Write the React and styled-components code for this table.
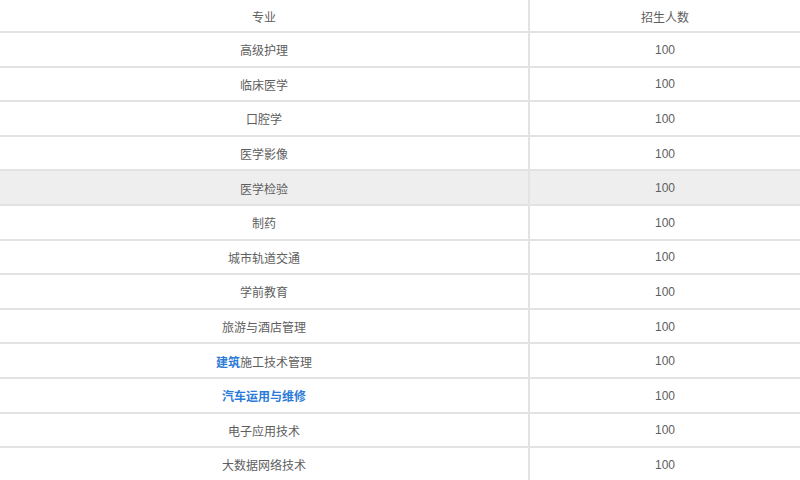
import React from 'react';
import styled, { createGlobalStyle } from 'styled-components';

const GlobalStyle = createGlobalStyle`
    body {
        margin: 0;
        background: #fff;
        overflow: hidden;
        font-family: "Liberation Sans", "Noto Sans CJK SC", sans-serif;
    }
`;

const Table = styled.div`
    width: 800px;
    height: 480px;
    overflow: hidden;
    font-size: 12px;
    color: #5e5e5e;
`;

const Row = styled.div`
    display: grid;
    grid-template-columns: 528px 1fr;
    box-sizing: border-box;
    height: ${p => (p.$head ? '31px' : '34.6px')};
    border-top: ${p => (p.$head ? 'none' : '2px solid #e3e3e3')};
    background: ${p => (p.$hover ? '#eeeeee' : '#fff')};
`;

const Cell = styled.div`
    display: flex;
    align-items: center;
    justify-content: center;
    padding-top: 1px;
    box-sizing: border-box;
    & + & {
        border-left: 2px solid #e3e3e3;
    }
`;

const Link = styled.span`
    color: #2b7bd8;
    font-weight: bold;
`;

const rows = [
    { name: '高级护理' },
    { name: '临床医学' },
    { name: '口腔学' },
    { name: '医学影像' },
    { name: '医学检验', hover: true },
    { name: '制药' },
    { name: '城市轨道交通' },
    { name: '学前教育' },
    { name: '旅游与酒店管理' },
    { name: <><Link>建筑</Link>施工技术管理</> },
    { name: <Link>汽车运用与维修</Link> },
    { name: '电子应用技术' },
    { name: '大数据网络技术' },
];

export default function App() {
    return (
        <>
            <GlobalStyle />
            <Table>
                <Row $head>
                    <Cell>专业</Cell>
                    <Cell>招生人数</Cell>
                </Row>
                {rows.map((r, i) => (
                    <Row key={i} $hover={r.hover}>
                        <Cell>{r.name}</Cell>
                        <Cell>100</Cell>
                    </Row>
                ))}
            </Table>
        </>
    );
}
